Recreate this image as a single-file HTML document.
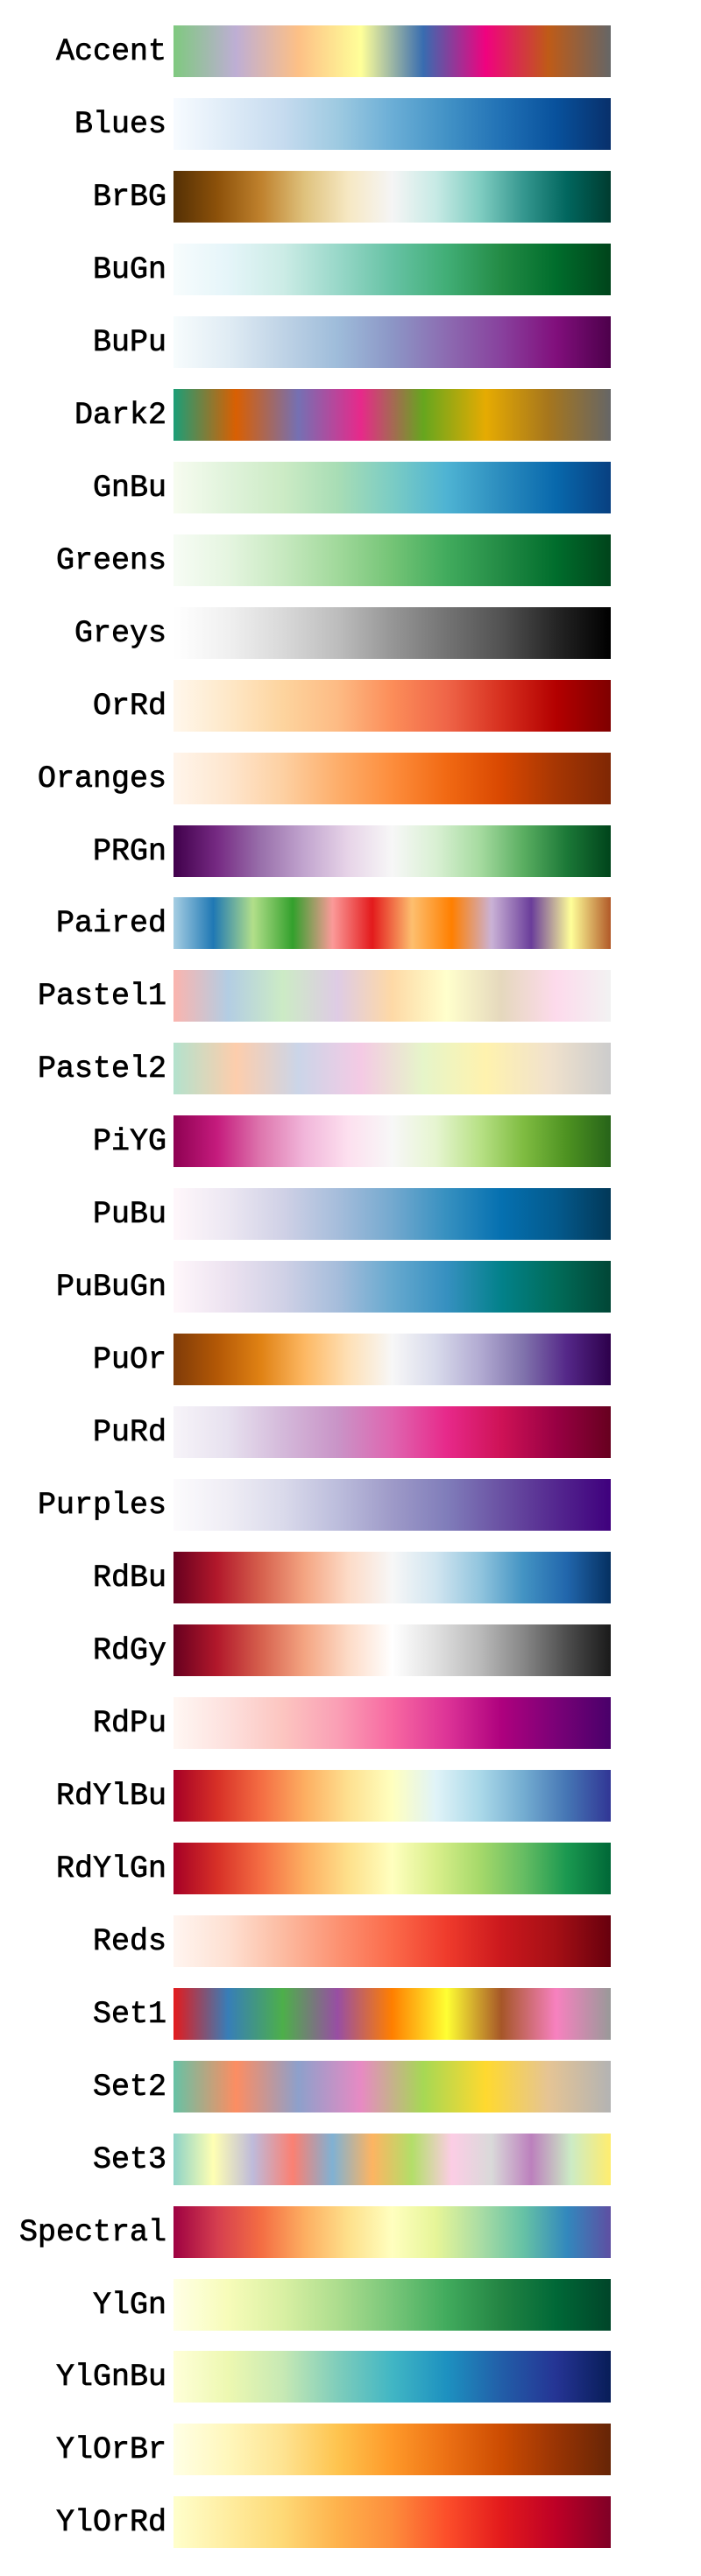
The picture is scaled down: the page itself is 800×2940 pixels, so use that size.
<!DOCTYPE html>
<html><head><meta charset="utf-8"><style>
html,body{margin:0;padding:0;background:#fff;width:800px;height:2940px;overflow:hidden}
.r{position:absolute;left:0;width:800px;height:59px}
.l{position:absolute;left:0;width:190px;height:59px;line-height:61px;text-align:right;font-family:"Liberation Mono",monospace;font-size:35px;color:#000;-webkit-text-stroke:0.7px #000}
.b{position:absolute;left:198px;width:499px;height:59px;top:0}
</style></head><body>
<div id="c"></div>
<script>
var d=[
["Accent","#7fc97f,#beaed4,#fdc086,#ffff99,#386cb0,#f0027f,#bf5b17,#666666"],
["Blues","#f7fbff,#deebf7,#c6dbef,#9ecae1,#6baed6,#4292c6,#2171b5,#08519c,#08306b"],
["BrBG","#543005,#8c510a,#bf812d,#dfc27d,#f6e8c3,#f5f5f5,#c7eae5,#80cdc1,#35978f,#01665e,#003c30"],
["BuGn","#f7fcfd,#e5f5f9,#ccece6,#99d8c9,#66c2a4,#41ae76,#238b45,#006d2c,#00441b"],
["BuPu","#f7fcfd,#e0ecf4,#bfd3e6,#9ebcda,#8c96c6,#8c6bb1,#88419d,#810f7c,#4d004b"],
["Dark2","#1b9e77,#d95f02,#7570b3,#e7298a,#66a61e,#e6ab02,#a6761d,#666666"],
["GnBu","#f7fcf0,#e0f3db,#ccebc5,#a8ddb5,#7bccc4,#4eb3d3,#2b8cbe,#0868ac,#084081"],
["Greens","#f7fcf5,#e5f5e0,#c7e9c0,#a1d99b,#74c476,#41ab5d,#238b45,#006d2c,#00441b"],
["Greys","#ffffff,#f0f0f0,#d9d9d9,#bdbdbd,#969696,#737373,#525252,#252525,#000000"],
["OrRd","#fff7ec,#fee8c8,#fdd49e,#fdbb84,#fc8d59,#ef6548,#d7301f,#b30000,#7f0000"],
["Oranges","#fff5eb,#fee6ce,#fdd0a2,#fdae6b,#fd8d3c,#f16913,#d94801,#a63603,#7f2704"],
["PRGn","#40004b,#762a83,#9970ab,#c2a5cf,#e7d4e8,#f7f7f7,#d9f0d3,#a6dba0,#5aae61,#1b7837,#00441b"],
["Paired","#a6cee3,#1f78b4,#b2df8a,#33a02c,#fb9a99,#e31a1c,#fdbf6f,#ff7f00,#cab2d6,#6a3d9a,#ffff99,#b15928"],
["Pastel1","#fbb4ae,#b3cde3,#ccebc5,#decbe4,#fed9a6,#ffffcc,#e5d8bd,#fddaec,#f2f2f2"],
["Pastel2","#b3e2cd,#fdcdac,#cbd5e8,#f4cae4,#e6f5c9,#fff2ae,#f1e2cc,#cccccc"],
["PiYG","#8e0152,#c51b7d,#de77ae,#f1b6da,#fde0ef,#f7f7f7,#e6f5d0,#b8e186,#7fbc41,#4d9221,#276419"],
["PuBu","#fff7fb,#ece7f2,#d0d1e6,#a6bddb,#74a9cf,#3690c0,#0570b0,#045a8d,#023858"],
["PuBuGn","#fff7fb,#ece2f0,#d0d1e6,#a6bddb,#67a9cf,#3690c0,#02818a,#016c59,#014636"],
["PuOr","#7f3b08,#b35806,#e08214,#fdb863,#fee0b6,#f7f7f7,#d8daeb,#b2abd2,#8073ac,#542788,#2d004b"],
["PuRd","#f7f4f9,#e7e1ef,#d4b9da,#c994c7,#df65b0,#e7298a,#ce1256,#980043,#67001f"],
["Purples","#fcfbfd,#efedf5,#dadaeb,#bcbddc,#9e9ac8,#807dba,#6a51a3,#54278f,#3f007d"],
["RdBu","#67001f,#b2182b,#d6604d,#f4a582,#fddbc7,#f7f7f7,#d1e5f0,#92c5de,#4393c3,#2166ac,#053061"],
["RdGy","#67001f,#b2182b,#d6604d,#f4a582,#fddbc7,#ffffff,#e0e0e0,#bababa,#878787,#4d4d4d,#1a1a1a"],
["RdPu","#fff7f3,#fde0dd,#fcc5c0,#fa9fb5,#f768a1,#dd3497,#ae017e,#7a0177,#49006a"],
["RdYlBu","#a50026,#d73027,#f46d43,#fdae61,#fee090,#ffffbf,#e0f3f8,#abd9e9,#74add1,#4575b4,#313695"],
["RdYlGn","#a50026,#d73027,#f46d43,#fdae61,#fee08b,#ffffbf,#d9ef8b,#a6d96a,#66bd63,#1a9850,#006837"],
["Reds","#fff5f0,#fee0d2,#fcbba1,#fc9272,#fb6a4a,#ef3b2c,#cb181d,#a50f15,#67000d"],
["Set1","#e41a1c,#377eb8,#4daf4a,#984ea3,#ff7f00,#ffff33,#a65628,#f781bf,#999999"],
["Set2","#66c2a5,#fc8d62,#8da0cb,#e78ac3,#a6d854,#ffd92f,#e5c494,#b3b3b3"],
["Set3","#8dd3c7,#ffffb3,#bebada,#fb8072,#80b1d3,#fdb462,#b3de69,#fccde5,#d9d9d9,#bc80bd,#ccebc5,#ffed6f"],
["Spectral","#9e0142,#d53e4f,#f46d43,#fdae61,#fee08b,#ffffbf,#e6f598,#abdda4,#66c2a5,#3288bd,#5e4fa2"],
["YlGn","#ffffe5,#f7fcb9,#d9f0a3,#addd8e,#78c679,#41ab5d,#238443,#006837,#004529"],
["YlGnBu","#ffffd9,#edf8b1,#c7e9b4,#7fcdbb,#41b6c4,#1d91c0,#225ea8,#253494,#081d58"],
["YlOrBr","#ffffe5,#fff7bc,#fee391,#fec44f,#fe9929,#ec7014,#cc4c02,#993404,#662506"],
["YlOrRd","#ffffcc,#ffeda0,#fed976,#feb24c,#fd8d3c,#fc4e2a,#e31a1c,#bd0026,#800026"]];
var h="";
d.forEach(function(e,i){h+='<div class="r" style="top:'+(29+i*82.95).toFixed(1)+'px"><div class="l">'+e[0]+'</div><div class="b" style="background:linear-gradient(to right,'+e[1]+')"></div></div>';});
document.getElementById("c").innerHTML=h;
</script>
</body></html>
